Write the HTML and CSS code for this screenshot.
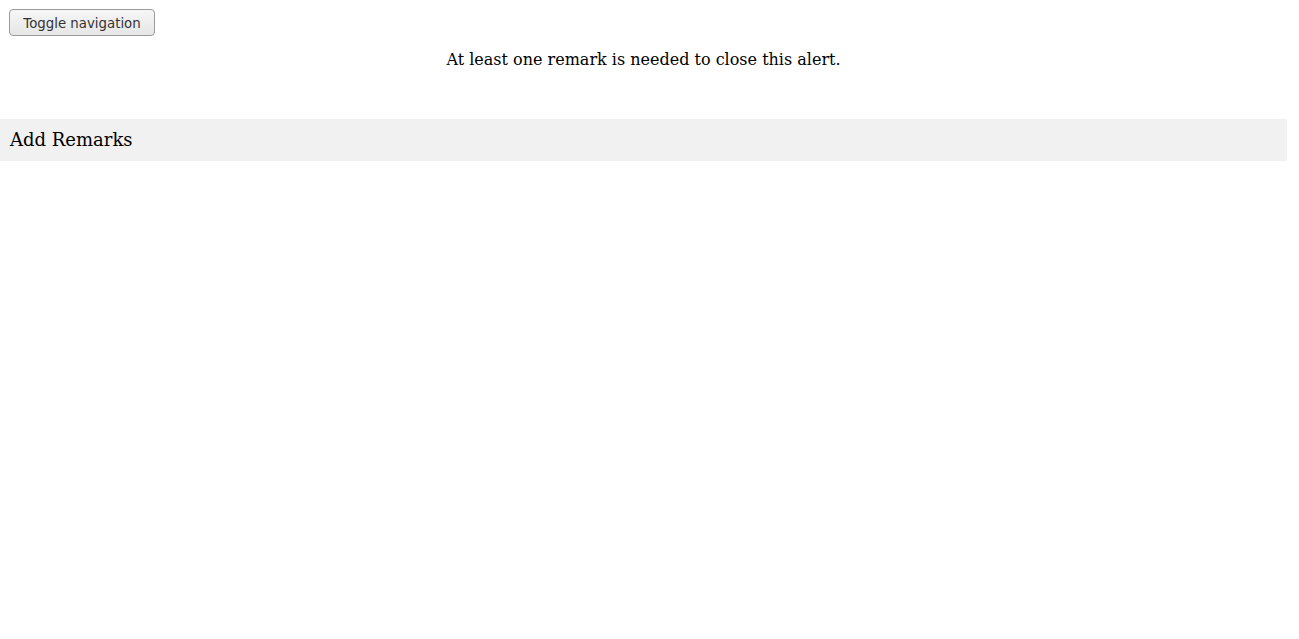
FILE: index.html
```html
<!DOCTYPE html>
<html>
<head>
<meta charset="utf-8">
<link rel="stylesheet" href="styles.css">
</head>
<body>
<div class="page">
  <div class="nav">
    <button class="toggle" type="button">Toggle navigation</button>
  </div>
  <p class="alert-msg">At least one remark is needed to close this alert.</p>
  <div class="panel-heading">Add Remarks</div>
</div>
</body>
</html>
```

FILE: styles.css
```css
html, body {
  margin: 0;
  padding: 0;
  background: #ffffff;
}
body {
  font-family: "DejaVu Serif", serif;
  color: #000000;
}
.page {
  width: 1287px;
}
.nav {
  padding: 9px 0 0 9px;
  height: 27px;
}
.toggle {
  font-family: "DejaVu Sans", sans-serif;
  font-size: 13.33px;
  color: #333333;
  height: 27px;
  width: 146px;
  padding: 1px 0 0 0;
  border: 1px solid #9a9a9a;
  border-radius: 4px;
  background: linear-gradient(#f6f6f6, #e6e6e6);
}
.alert-msg {
  margin: 14px 0 0 0;
  font-size: 16px;
  line-height: 19px;
  text-align: center;
}
.panel-heading {
  margin-top: 50px;
  background: #f1f1f1;
  height: 42px;
  box-sizing: border-box;
  padding: 9px 10px;
  font-size: 18px;
  line-height: 24px;
}
```
